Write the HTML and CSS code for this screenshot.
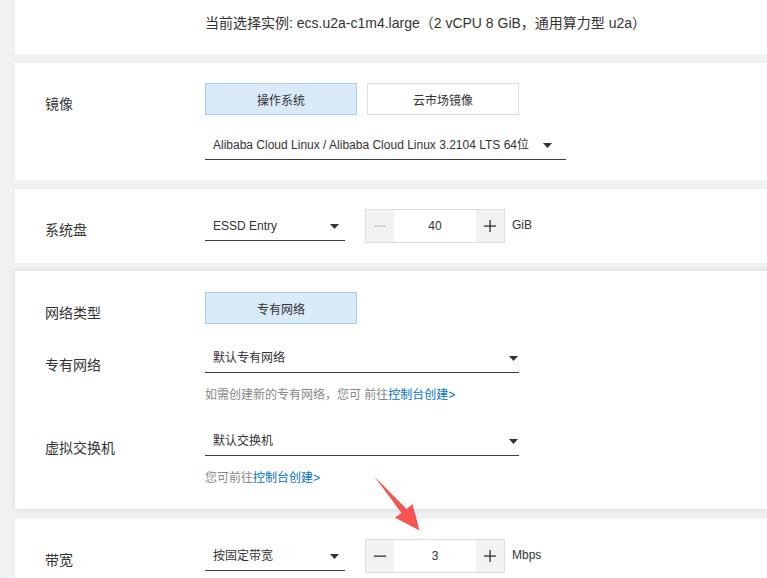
FILE: index.html
```html
<!DOCTYPE html>
<html lang="zh-CN">
<head>
  <meta charset="UTF-8">
  <meta name="viewport" content="width=device-width, initial-scale=1">
  <title>ECS 配置</title>
  <link rel="stylesheet" href="styles.css">
</head>
<body>
  <div class="page">

    <!-- 当前实例 -->
    <section class="card card-top">
      <p class="current">当前选择实例: ecs.u2a-c1m4.large（2 vCPU 8 GiB，通用算力型 u2a）</p>
    </section>

    <!-- 镜像 -->
    <section class="card card-image">
      <div class="row">
        <div class="label">镜像</div>
        <div class="field">
          <div class="tabs">
            <button class="tab active">操作系统</button>
            <button class="tab">云市场镜像</button>
          </div>
          <div class="select select-image">
            <span>Alibaba Cloud Linux / Alibaba Cloud Linux 3.2104 LTS 64位</span>
            <svg class="caret" width="9" height="5" viewBox="0 0 9 5"><polygon points="0,0 9,0 4.5,5" fill="#333"/></svg>
          </div>
        </div>
      </div>
    </section>

    <!-- 系统盘 -->
    <section class="card card-disk">
      <div class="row">
        <div class="label">系统盘</div>
        <div class="field field-inline">
          <div class="select select-short">
            <span>ESSD Entry</span>
            <svg class="caret" width="9" height="5" viewBox="0 0 9 5"><polygon points="0,0 9,0 4.5,5" fill="#333"/></svg>
          </div>
          <div class="number">
            <span class="step disabled">
              <svg width="12" height="12" viewBox="0 0 12 12"><rect x="0" y="5.5" width="12" height="1.2" fill="#c8c8c8"/></svg>
            </span>
            <span class="value">40</span>
            <span class="step">
              <svg width="12" height="12" viewBox="0 0 12 12"><rect x="0" y="5.4" width="12" height="1.3" fill="#333"/><rect x="5.4" y="0" width="1.3" height="12" fill="#333"/></svg>
            </span>
          </div>
          <span class="unit">GiB</span>
        </div>
      </div>
    </section>

    <!-- 网络 -->
    <section class="card card-net">
      <div class="row">
        <div class="label">网络类型</div>
        <div class="field">
          <div class="tabs">
            <button class="tab active">专有网络</button>
          </div>
        </div>
      </div>
      <div class="row row-vpc">
        <div class="label label-low">专有网络</div>
        <div class="field">
          <div class="select select-wide">
            <span>默认专有网络</span>
            <svg class="caret" width="9" height="5" viewBox="0 0 9 5"><polygon points="0,0 9,0 4.5,5" fill="#333"/></svg>
          </div>
          <p class="help">如需创建新的专有网络，您可 前往<a href="#">控制台创建&gt;</a></p>
        </div>
      </div>
      <div class="row row-vsw">
        <div class="label label-low">虚拟交换机</div>
        <div class="field">
          <div class="select select-wide">
            <span>默认交换机</span>
            <svg class="caret" width="9" height="5" viewBox="0 0 9 5"><polygon points="0,0 9,0 4.5,5" fill="#333"/></svg>
          </div>
          <p class="help">您可前往<a href="#">控制台创建&gt;</a></p>
        </div>
      </div>
    </section>

    <!-- 带宽 -->
    <section class="card card-bw">
      <div class="row">
        <div class="label">带宽</div>
        <div class="field field-inline">
          <div class="select select-short">
            <span>按固定带宽</span>
            <svg class="caret" width="9" height="5" viewBox="0 0 9 5"><polygon points="0,0 9,0 4.5,5" fill="#333"/></svg>
          </div>
          <div class="number">
            <span class="step">
              <svg width="12" height="12" viewBox="0 0 12 12"><rect x="0" y="5.5" width="12" height="1.3" fill="#333"/></svg>
            </span>
            <span class="value">3</span>
            <span class="step">
              <svg width="12" height="12" viewBox="0 0 12 12"><rect x="0" y="5.4" width="12" height="1.3" fill="#333"/><rect x="5.4" y="0" width="1.3" height="12" fill="#333"/></svg>
            </span>
          </div>
          <span class="unit">Mbps</span>
        </div>
      </div>
    </section>

  </div>

  <!-- 标注箭头 -->
  <svg class="arrow" width="767" height="578" viewBox="0 0 767 578">
    <polygon points="374,476 406.5,509 412.5,504 419.5,530.5 395,517.5 401.5,513" fill="#f75353"/>
  </svg>
</body>
</html>
```

FILE: styles.css
```css
/* 基础 */
* { margin: 0; padding: 0; box-sizing: border-box; }
html, body { height: 100%; overflow: hidden; }
body {
  font-family: "Liberation Sans", "Noto Sans CJK SC", sans-serif;
  background: #f0f1f3;
  color: #333;
  font-size: 12px;
}
a { text-decoration: none; color: #0070cc; }

.page {
  padding-left: 15px;
  display: flex;
  flex-direction: column;
}

/* 卡片 */
.card {
  background: #fff;
  padding: 20px 0 20px 30px;
}
.card-top { height: 54px; padding-top: 13px; }
.card-image { margin-top: 9px; }
.card-disk { margin-top: 9px; }
.card-net {
  margin-top: 8px;
  padding-top: 21px;
  padding-bottom: 22px;
  box-shadow: 0 0 6px rgba(0,0,0,0.12);
  position: relative;
}
.card-bw {
  margin-top: 10px;
  height: 80px;
  background: linear-gradient(#fff 70%, #f8f8f9 100%);
}

.current {
  padding-left: 160px;
  font-size: 14px;
  line-height: 20px;
}

/* 行 */
.row { display: flex; align-items: flex-start; }
.row-vpc { margin-top: 17px; }
.row-vsw { margin-top: 20px; }
.label {
  width: 160px;
  flex: none;
  font-size: 14px;
  line-height: 20px;
  padding-top: 11px;
}
.label-low { padding-top: 14px; }
.field { display: flex; flex-direction: column; align-items: flex-start; }
.field-inline { flex-direction: row; align-items: flex-start; }

/* 选项按钮 */
.tabs { display: flex; gap: 10px; }
.tab {
  width: 152px;
  height: 32px;
  border: 1px solid #dcdcdc;
  background: #fff;
  color: #333;
  font-family: inherit;
  font-size: 12px;
  cursor: pointer;
}
.tab.active {
  background: #d9eaf8;
  border-color: #a9cdee;
}

/* 下拉 */
.select {
  height: 32px;
  border-bottom: 1px solid #3a3d42;
  display: flex;
  align-items: center;
  justify-content: space-between;
  padding-top: 3px;
  padding-left: 8px;
  line-height: 18px;
}
.select-image { width: 361px; margin-top: 13px; padding-right: 14px; }
.select-short { width: 140px; padding-right: 6px; }
.select-wide { width: 314px; padding-right: 1px; }
.caret { flex: none; }

.help {
  margin-top: 13px;
  line-height: 18px;
  color: #888;
}

/* 数字输入 */
.number {
  margin-left: 20px;
  width: 140px;
  height: 34px;
  border: 1px solid #dcdcdc;
  display: flex;
}
.step {
  width: 28px;
  flex: none;
  background: #f2f2f2;
  display: flex;
  align-items: center;
  justify-content: center;
}
.value {
  flex: 1;
  background: #fff;
  display: flex;
  align-items: center;
  justify-content: center;
}
.unit {
  margin-left: 7px;
  line-height: 32px;
}

/* 标注 */
.arrow {
  position: absolute;
  left: 0;
  top: 0;
  pointer-events: none;
}
```
